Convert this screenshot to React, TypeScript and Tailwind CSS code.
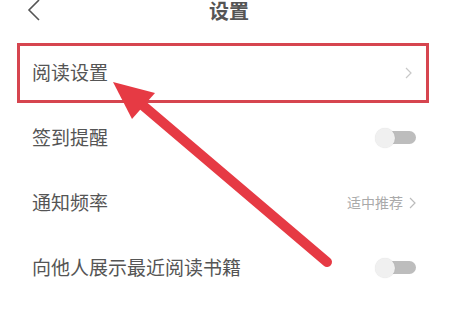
import React from 'react';

function Chevron({ className }: { className?: string }) {
  return (
    <svg width="7" height="12" viewBox="0 0 7 12" className={className} fill="none">
      <path d="M1 1l5 5-5 5" stroke="currentColor" strokeWidth="1.2" />
    </svg>
  );
}

function Toggle() {
  return (
    <div className="relative w-[41px] h-[20px]">
      <div className="absolute right-0 top-[3.5px] w-[32px] h-[13px] rounded-full bg-[#bdbdbd]" />
      <div className="absolute left-0 top-0 w-[20px] h-[20px] rounded-full bg-[#f0f0f0] shadow-[0_0_1px_rgba(0,0,0,0.15)]" />
    </div>
  );
}

function Row({ label, children }: { label: string; children?: React.ReactNode }) {
  return (
    <div className="flex items-center justify-between h-[65px] pl-[32px] pr-[42px]">
      <span className="text-[19px] text-[#555]">{label}</span>
      {children}
    </div>
  );
}

export default function App() {
  return (
    <div
      className="relative w-[458px] h-[315px] bg-white overflow-hidden"
      style={{ fontFamily: '"Noto Sans CJK SC", "Noto Sans", sans-serif' }}
    >
      {/* Header */}
      <div className="relative flex items-center justify-center h-[22px]">
        <svg width="13" height="22" viewBox="0 0 13 22" fill="none" className="absolute left-[27px] top-[-1px] text-[#555]">
          <path d="M12 1L2 11l10 10" stroke="currentColor" strokeWidth="1.6" />
        </svg>
        <span className="text-[20px] font-bold text-[#555] leading-[22px]">设置</span>
      </div>

      {/* List */}
      <div className="mt-[18px]">
        <Row label="阅读设置">
          <Chevron className="text-[#c8c8c8] mr-[4px]" />
        </Row>
        <Row label="签到提醒">
          <Toggle />
        </Row>
        <Row label="通知频率">
          <div className="flex items-center gap-[6px] text-[#aaa]">
            <span className="text-[14px]">适中推荐</span>
            <Chevron className="text-[#bbb]" />
          </div>
        </Row>
        <Row label="向他人展示最近阅读书籍">
          <Toggle />
        </Row>
      </div>

      {/* Annotation box */}
      <div className="absolute left-[17px] top-[43px] w-[412px] h-[60px] border-[3px] border-[#d6454f]" />

      {/* Annotation arrow */}
      <svg className="absolute left-0 top-0" width="458" height="315" viewBox="0 0 458 315" fill="none">
        <line x1="140" y1="103" x2="327" y2="262" stroke="#e63a44" strokeWidth="10" strokeLinecap="round" />
        <polygon points="113,82 155,93 132,119" fill="#e63a44" />
      </svg>
    </div>
  );
}
